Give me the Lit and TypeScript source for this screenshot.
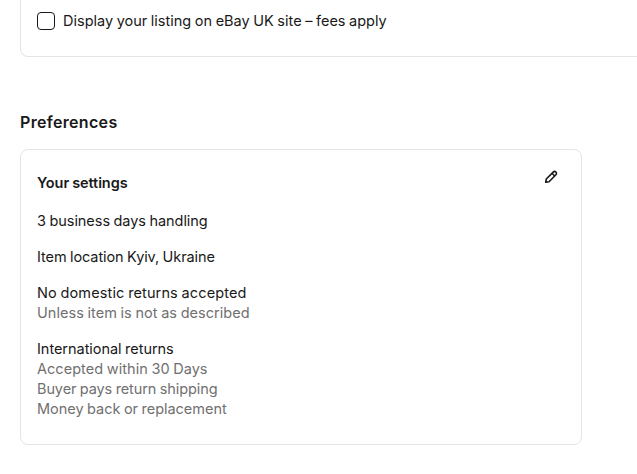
import { LitElement, html, css } from "lit";
import { customElement } from "lit/decorators.js";
import { classMap } from "lit/directives/class-map.js";
import { styleMap } from "lit/directives/style-map.js";

interface Line {
  text: string;
  tracking: number;
  muted?: boolean;
}

const groups: Line[][] = [
  [{ text: "3 business days handling", tracking: -0.05 }],
  [{ text: "Item location Kyiv, Ukraine", tracking: -0.09 }],
  [
    { text: "No domestic returns accepted", tracking: 0.12 },
    { text: "Unless item is not as described", tracking: 0.04, muted: true },
  ],
  [
    { text: "International returns", tracking: -0.04 },
    { text: "Accepted within 30 Days", tracking: 0.04, muted: true },
    { text: "Buyer pays return shipping", tracking: -0.1, muted: true },
    { text: "Money back or replacement", tracking: -0.03, muted: true },
  ],
];

@customElement("app-root")
export class AppRoot extends LitElement {
  static styles = css`
    :host {
      display: block;
      height: 474px;
      overflow: hidden;
      box-sizing: border-box;
      padding-left: 20px;
      background: #fff;
      color: #191919;
      font: 14.5px/20px Inter, "Liberation Sans", sans-serif;
      word-spacing: -0.5px;
    }
    .listing {
      box-sizing: border-box;
      height: 57px;
      padding: 11px 0 0 16px;
      border: 1px solid #e5e5e5;
      border-width: 0 0 1px 1px;
      border-bottom-left-radius: 8px;
    }
    .option {
      display: flex;
      align-items: center;
      gap: 8px;
      white-space: nowrap;
    }
    .box {
      box-sizing: border-box;
      width: 18px;
      height: 18px;
      border: 1px solid #191919;
      border-radius: 4px;
    }
    .title {
      margin: 53px 0 15px;
      font-size: 16px;
      line-height: 24px;
      font-weight: 600;
      letter-spacing: 0.33px;
    }
    .card {
      box-sizing: border-box;
      width: 562px;
      height: 296px;
      padding: 20px 16px 0;
      border: 1px solid #e5e5e5;
      border-radius: 8px;
    }
    .head {
      display: flex;
      justify-content: space-between;
      align-items: flex-start;
      height: 20px;
      padding-top: 3px;
      margin-bottom: 18px;
    }
    .subtitle {
      margin: 0;
      font-size: 14.5px;
      line-height: 20px;
      font-weight: 600;
      letter-spacing: -0.08px;
    }
    .edit {
      margin: -3px 7px 0 0;
      width: 14px;
      height: 14px;
    }
    .group {
      margin-bottom: 16px;
    }
    .line {
      white-space: nowrap;
    }
    .muted {
      color: #707070;
    }
  `;

  render() {
    return html`
      <section class="listing">
        <label class="option"><span class="box"></span><span>Display your listing on eBay UK site – fees apply</span></label>
      </section>
      <h2 class="title">Preferences</h2>
      <section class="card">
        <div class="head">
          <h3 class="subtitle">Your settings</h3>
          <svg class="edit" viewBox="0 0 14 14" fill="none" stroke="#191919" stroke-width="1.6" stroke-linejoin="round">
            <path d="M1.7 12.3 2.3 9 9.2 2.1a1.9 1.9 0 0 1 2.7 2.7L5 11.7Z M8 3.3 10.7 6" />
          </svg>
        </div>
        ${groups.map(
          (group) => html`<div class="group">
            ${group.map(
              (l) => html`<div class=${classMap({ line: true, muted: !!l.muted })} style=${styleMap({ letterSpacing: `${l.tracking}px` })}>${l.text}</div>`
            )}
          </div>`
        )}
      </section>
    `;
  }
}
